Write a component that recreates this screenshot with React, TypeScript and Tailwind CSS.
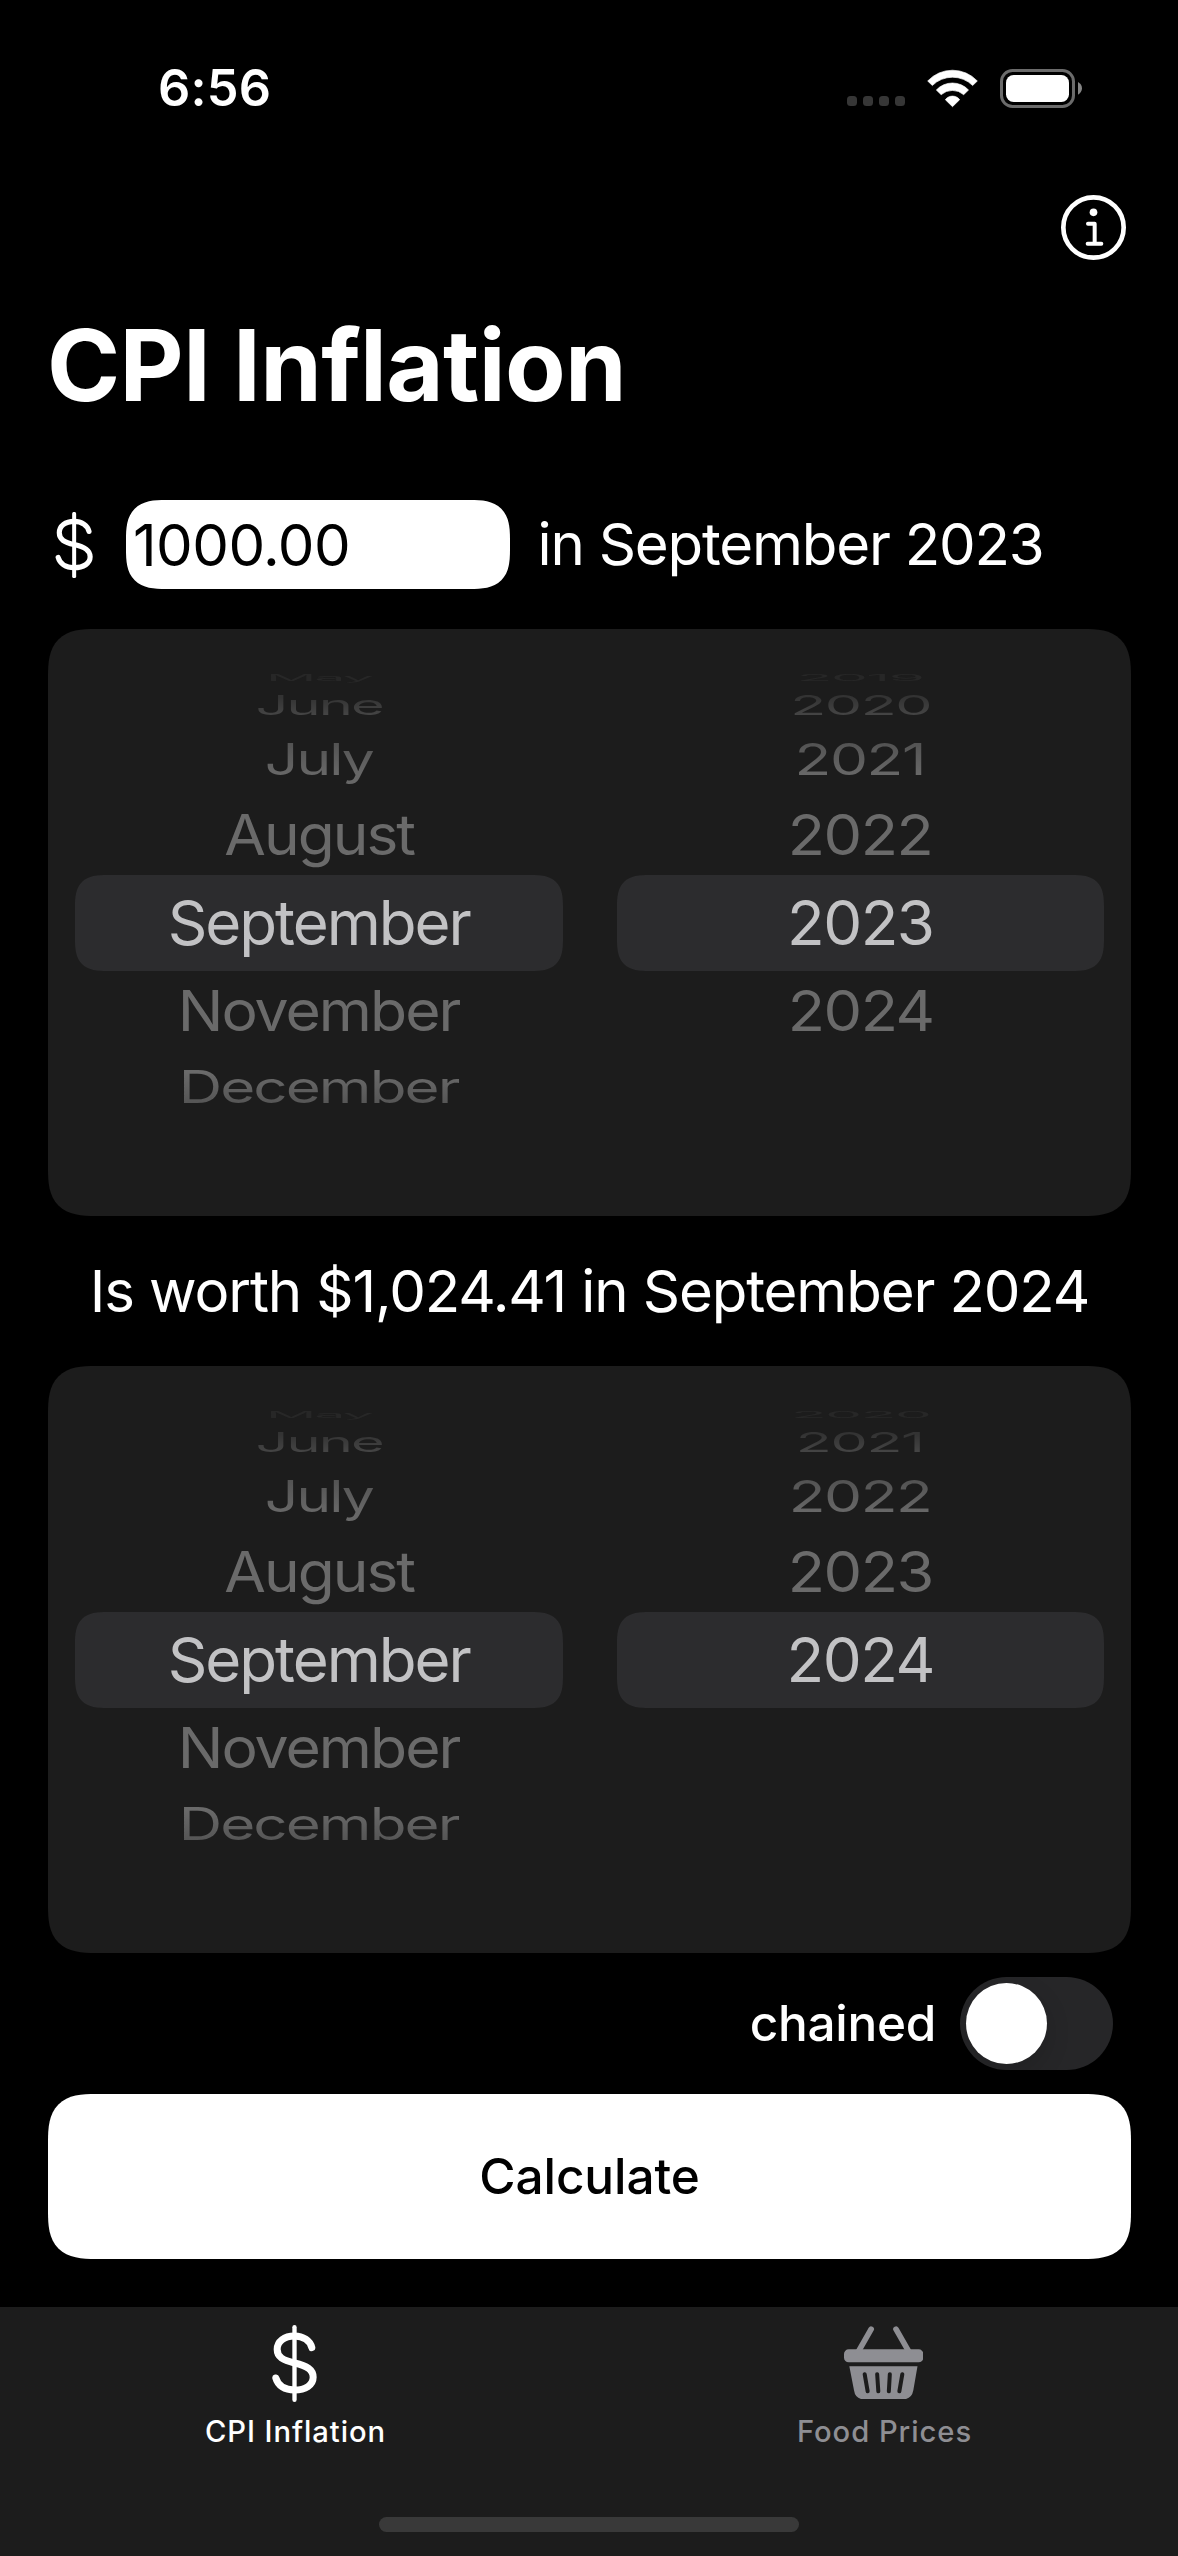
import { useState } from "react";

const DOLLAR_PATH =
  "M157 114 C152 93 131 79 105 79 C74 79 53 95 53 119 C53 142 70 152 105 160 C143 169 161 180 161 203 C161 226 138 241 105 241 C75 241 55 227 49 205";

function DollarIcon({ className, weight, bar }: { className: string; weight: number; bar: number }) {
  return (
    <svg viewBox="38 46 134 231" className={className} fill="none" stroke="currentColor" strokeLinecap="round">
      <path d={DOLLAR_PATH} strokeWidth={weight} />
      <path d="M105 52.5 V270.5" strokeWidth={bar} />
    </svg>
  );
}

function WifiIcon() {
  return (
    <svg viewBox="378 54 153 117" className="h-[39px] w-[51px]" fill="white" stroke="white" strokeWidth="2" strokeLinejoin="round">
      <path d="M380 90 A102 102 0 0 1 529 90 L515 103.500 A86 86 0 0 0 394 103.500 Z" />
      <path d="M406 117 A66 66 0 0 1 502.500 117 L488 131 A51 51 0 0 0 420.500 131 Z" />
      <path d="M433 146 A27 27 0 0 1 476 146 L454.500 167 Z" />
    </svg>
  );
}

function BatteryIcon() {
  return (
    <svg viewBox="597 54 247 117" className="h-[39px] w-[82.333px]">
      <rect x="601.500" y="58.500" width="216" height="108" rx="33" fill="none" stroke="#6b6b6b" strokeWidth="9" />
      <rect x="615" y="72" width="189" height="81" rx="23" fill="white" />
      <path d="M831 93 C838 97 843 103 843 112 C843 121 838 127 831 131 Z" fill="#858585" />
    </svg>
  );
}

function InfoIcon() {
  return (
    <svg viewBox="779.500 434.500 195 195" className="size-[65px]" fill="none" stroke="white" strokeLinecap="round" strokeLinejoin="round">
      <circle cx="877" cy="532" r="90.500" strokeWidth="14" />
      <circle cx="877" cy="486.500" r="11.500" fill="white" stroke="none" />
      <path d="M860.500 520.500 H880.500 V580.500 M859.500 580.500 H900.500" strokeWidth="12" />
    </svg>
  );
}

function BasketIcon() {
  return (
    <svg viewBox="192 107 238 220" className="h-[73.333px] w-[79.333px]" fill="currentColor">
      <g stroke="currentColor" strokeWidth="17" strokeLinecap="round">
        <path d="M273.500 116.500 L235 184" />
        <path d="M348 116.500 L386.500 184" />
      </g>
      <rect x="192" y="177" width="238" height="39" rx="14" />
      <path d="M208 228 H412.500 L400 300 Q395 327 369 327 H252 Q226 327 222 300 Z" />
      <g stroke="#1c1c1c" strokeWidth="12" strokeLinecap="round">
        <path d="M254 251.500 L263 303" />
        <path d="M291.500 251.500 L295 303" />
        <path d="M329.500 251.500 L326.500 303" />
        <path d="M367 251.500 L358 303" />
      </g>
    </svg>
  );
}

/* Rows of the wheel, top to bottom; the fifth one is the selected one. */
const ROWS = [
  { row: "h-[10px]", text: "text-[#272727]" },
  { row: "h-[44px]", text: "text-transparent bg-clip-text bg-linear-to-b from-[#333] from-30% to-[#444] to-75%" },
  { row: "h-[64px]", text: "text-transparent bg-clip-text bg-linear-to-b from-[#535353] from-25% to-[#676767] to-75%" },
  { row: "h-[88px]", text: "text-[#6a6a6a]" },
  { row: "h-[96px] -my-1 bg-[#2c2c2e] rounded-[32px] [corner-shape:superellipse(1.5)]", text: "text-[#c2c2c4]" },
  { row: "h-[88px]", text: "text-[#6a6a6a]" },
  { row: "h-[64px]", text: "text-transparent bg-clip-text bg-linear-to-b from-[#6a6a6a] from-25% to-[#565656] to-75%" },
  { row: "h-[44px]", text: "" },
  { row: "h-[10px]", text: "" },
];

const MONTH_SCALE = [
  "scale-x-[0.895] scale-y-[0.135]",
  "scale-x-[0.935] scale-y-[0.445]",
  "scale-x-[0.95] scale-y-[0.715]",
  "scale-x-[0.977] scale-y-[0.92]",
  "",
  "scale-x-[0.981] scale-y-[0.92]",
  "scale-x-[0.974] scale-y-[0.72]",
  "",
  "",
];

const YEAR_SCALE = [
  "scale-x-[0.945] scale-y-[0.135]",
  "scale-x-[0.957] scale-y-[0.445]",
  "scale-x-[0.977] scale-y-[0.715]",
  "scale-x-[0.99] scale-y-[0.92]",
  "",
  "scale-x-[0.99] scale-y-[0.92]",
  "",
  "",
  "",
];

function Wheel({ items, scales, tracking }: { items: string[]; scales: string[]; tracking: string }) {
  return (
    <div className={`flex flex-col justify-center text-[61.800px] leading-none ${tracking}`}>
      {ROWS.map(({ row, text }, i) => (
        <div key={i} className={`flex shrink-0 items-center justify-center ${row}`}>
          {items[i] && <span className={`block shrink-0 px-1 py-3 ${text} ${scales[i]}`}>{items[i]}</span>}
        </div>
      ))}
    </div>
  );
}

const MONTHS = ["May", "June", "July", "August", "September", "November", "December"];

function DatePicker({ years }: { years: string[] }) {
  return (
    <div className="grid h-[587px] grid-cols-2 gap-[54px] rounded-[48px] bg-[#1c1c1c] px-[27px] [corner-shape:superellipse(1.5)]">
      <Wheel items={MONTHS} scales={MONTH_SCALE} tracking="tracking-[-2.020px]" />
      <Wheel items={years} scales={YEAR_SCALE} tracking="tracking-[-1.490px]" />
    </div>
  );
}

export default function App() {
  const [amount, setAmount] = useState("1000.00");
  return (
    <div className="flex h-[2556px] w-[1178px] flex-col overflow-hidden bg-black font-['Inter',sans-serif] leading-none text-white">
      <header className="flex h-[176px] items-center justify-between pr-[96px] pl-[158px]">
        <span className="text-[50.500px] font-semibold tracking-[0.200px]">6:56</span>
        <div className="flex items-center">
          <div className="mt-[26px] mr-[22px] flex gap-1.5">
            {[0, 1, 2, 3].map((n) => (
              <span key={n} className="size-[10px] rounded-[3.500px] bg-[#363636]" />
            ))}
          </div>
          <WifiIcon />
          <div className="ml-[22px]">
            <BatteryIcon />
          </div>
        </div>
      </header>

      <main className="flex flex-col px-[48px] pr-[47px]">
        <button className="mt-[19px] mr-[5px] self-end" aria-label="Information">
          <InfoIcon />
        </button>
        <h1 className="mt-[50px] -ml-px text-[99px] leading-[110px] font-bold tracking-[-0.630px]">CPI Inflation</h1>

        <div className="mt-[80px] flex h-[89px] items-center text-[58.200px]">
          <DollarIcon className="ml-[6.500px] h-[66px] w-[38.300px]" weight={18} bar={14} />
          <input
            value={amount}
            onChange={(e) => setAmount(e.target.value)}
            className="ml-[33.200px] h-[89px] w-[384px] rounded-[40px] bg-white pl-[7px] tracking-[-0.550px] text-black outline-none [corner-shape:superellipse(1.5)]"
          />
          <span className="ml-[27.500px] tracking-[-1.200px] whitespace-nowrap">in September 2023</span>
        </div>

        <div className="mt-[40px]">
          <DatePicker years={["2019", "2020", "2021", "2022", "2023", "2024"]} />
        </div>
        <p className="text-center text-[58.200px] leading-[150px] tracking-[-1.140px] whitespace-nowrap">
          Is worth $1,024.41 in September 2024
        </p>
        <DatePicker years={["2020", "2021", "2022", "2023", "2024"]} />

        <div className="mt-[24px] mr-[18px] flex h-[93px] items-center justify-end gap-[24px]">
          <span className="text-[49.500px] font-[450] tracking-[-0.300px]">chained</span>
          <span className="flex h-[93px] w-[153px] items-center rounded-full bg-[#262628] pl-[6px]">
            <span className="size-[81px] rounded-full bg-white shadow-[0_9px_24px_rgba(0,0,0,0.15)]" />
          </span>
        </div>
        <button className="mt-[24px] h-[165px] rounded-[48px] bg-white text-[49.500px] font-[450] tracking-[-0.100px] text-black [corner-shape:superellipse(1.5)]">
          Calculate
        </button>
      </main>

      <nav className="mt-[48px] flex h-[249px] flex-col bg-[#1c1c1c]">
        <div className="grid grid-cols-2 text-[29.200px] font-medium tracking-[0.950px]">
          <div className="flex flex-col items-center">
            <DollarIcon className="mt-[18px] h-[77px] w-[45px]" weight={21} bar={13} />
            <span className="mt-[15px] pl-[2px]">CPI Inflation</span>
          </div>
          <div className="flex flex-col items-center text-[#8e8e93]">
            <div className="flex h-[95px] items-end pb-[3px]">
              <BasketIcon />
            </div>
            <span className="mt-[15px] pl-[2px]">Food Prices</span>
          </div>
        </div>
        <div className="mt-auto mb-[24px] h-[15px] w-[420px] self-center rounded-full bg-[#393939]" />
      </nav>
    </div>
  );
}
